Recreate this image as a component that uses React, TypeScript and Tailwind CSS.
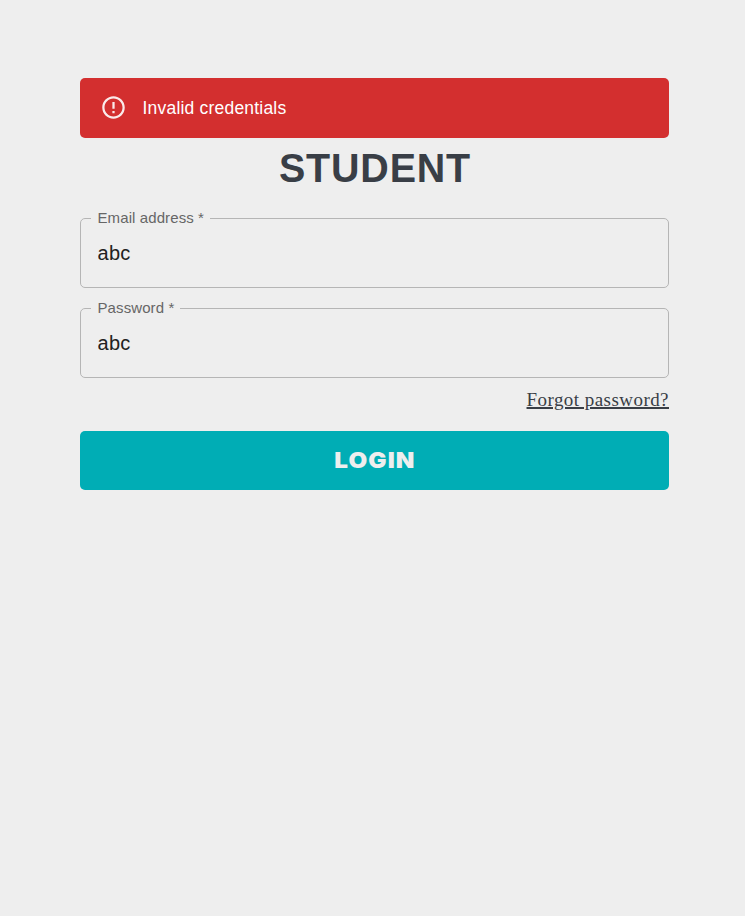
import React from "react";

function Field({ label, value, labelClass, gap }: { label: string; value: string; labelClass: string; gap: string }) {
  return (
    <fieldset className={`h-[75px] min-w-0 rounded-[5px] border border-[#b5b5b5] pl-[16px] ${gap}`}>
      <legend className={`-ml-[6px] h-[11px] pl-[6.5px] text-[15px] leading-[9px] whitespace-nowrap text-[#666] ${labelClass}`}>{label}</legend>
      <input
        type="text"
        defaultValue={value}
        aria-label={label}
        className="block h-[58px] w-full bg-transparent pl-[0.5px] text-[20px] tracking-[0.3px] text-[#212121] outline-none"
      />
    </fieldset>
  );
}

export default function App() {
  return (
    <main className="min-h-screen bg-[#eeeeee] pt-[78px] pr-[76px] pl-[80px] font-['Liberation_Sans',Arial,sans-serif]">
      <div className="flex h-[60px] items-center rounded-[5px] bg-[#d32f2f] pl-[20px] text-white">
        <svg viewBox="0 0 24 24" className="mr-[15.5px] mb-[1px] h-[27px] w-[27px] opacity-90" fill="currentColor">
          <path d="M11 15h2v2h-2zm0-8h2v6h-2zm.99-5C6.47 2 2 6.48 2 12s4.47 10 9.99 10C17.52 22 22 17.52 22 12S17.52 2 11.99 2zM12 20c-4.42 0-8-3.58-8-8s3.58-8 8-8 8 3.58 8 8-3.58 8-8 8z" />
        </svg>
        <p className="text-[17.5px] tracking-[0.2px]">Invalid credentials</p>
      </div>
      <h1 className="h-[75px] scale-x-[0.95] pl-[1px] text-center text-[41.5px] leading-[59px] font-bold tracking-[0.9px] text-[#393e46]">STUDENT</h1>
      <form onSubmit={(event) => event.preventDefault()}>
        <Field label="Email address *" value="abc" labelClass="w-[119px] tracking-[0.1px]" gap="mb-[15px]" />
        <Field label="Password *" value="abc" labelClass="w-[89px] tracking-[0.1px]" gap="" />
        <div className="flex h-[53px] justify-end pt-[10px]">
          <a href="#" className="font-['Liberation_Serif','Times_New_Roman',serif] text-[19px] leading-[24px] tracking-[0.45px] text-[#393e46] underline decoration-2 underline-offset-1">Forgot password?</a>
        </div>
        <button className="h-[59px] w-full rounded-[5px] bg-[#00adb5] font-['Inter',sans-serif] text-[22px] font-black text-[#eeeeee]">
          <span className="inline-block scale-x-[1.1] pl-[1px] tracking-[1px]">LOGIN</span>
        </button>
      </form>
    </main>
  );
}
